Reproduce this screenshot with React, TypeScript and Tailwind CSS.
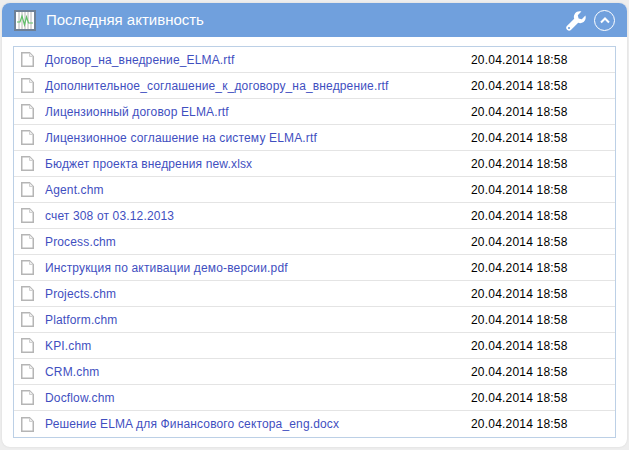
const rows = [
  'Договор_на_внедрение_ELMA.rtf',
  'Дополнительное_соглашение_к_договору_на_внедрение.rtf',
  'Лицензионный договор ELMA.rtf',
  'Лицензионное соглашение на систему ELMA.rtf',
  'Бюджет проекта внедрения new.xlsx',
  'Agent.chm',
  'счет 308 от 03.12.2013',
  'Process.chm',
  'Инструкция по активации демо-версии.pdf',
  'Projects.chm',
  'Platform.chm',
  'KPI.chm',
  'CRM.chm',
  'Docflow.chm',
  'Решение ELMA для Финансового сектора_eng.docx',
];

const FileIcon = () => (
  <svg width="13" height="15" viewBox="0 0 13 15" className="shrink-0">
    <path d="M0.75 0.75H8.5L12.25 4.5V14.25H0.75Z" fill="#fff" stroke="#b5b5b5" strokeWidth="1.5" />
    <path d="M8.5 1V4.5H12" fill="#f0f0f0" stroke="#d0d0d0" />
  </svg>
);

const App = () => {
  return (
    <div className="h-[450px] w-[629px] bg-[#eeeeee] p-[2px] pt-[3px] font-['Liberation_Sans',Arial,sans-serif]">
      <div className="h-[444px] overflow-hidden rounded-lg bg-white shadow-[0_0_2px_#d4d4d4]">
        <div className="flex h-[34px] items-center bg-[#70a0dd] pl-3 pr-3">
          <svg width="22" height="21" viewBox="0 0 22 21" className="shrink-0">
            <rect x="1" y="1" width="20" height="19" fill="#fff" stroke="#6e8096" strokeWidth="2" />
            <path d="M5 2V19M8 2V19M11 2V19M14 2V19M17 2V19" stroke="#b4b4b4" strokeWidth="1" />
            <path d="M3 12H6L8 6L10.5 15L12.5 7L14.5 13H19" fill="none" stroke="#5fbf68" strokeWidth="1.2" />
          </svg>
          <span className="ml-[10px] mt-px text-[15px] text-white">Последняя активность</span>
          <svg width="20" height="20" viewBox="0 0 20 20" className="ml-auto mt-px shrink-0">
            <path
              d="M19.4 4.6L15.8 8.2L12.6 7.4L11.8 4.2L15.4 0.6C13 -0.2 10.4 0.6 9 2.4C7.8 4 7.5 6 8.2 7.8L0.9 15.1C-0.1 16.1 -0.1 17.6 0.9 18.6L1.4 19.1C2.4 20.1 3.9 20.1 4.9 19.1L12.2 11.8C14 12.5 16 12.2 17.6 11C19.4 9.6 20.2 7 19.4 4.6Z"
              fill="#fff"
            />
            <circle cx="3" cy="17" r="1.1" fill="#70a0dd" />
          </svg>
          <div className="ml-2 mt-px flex h-[21px] w-[21px] items-center justify-center rounded-full border-[1.5px] border-white">
            <svg width="10" height="7" viewBox="0 0 10 7">
              <path d="M1 5.5L5 1.5L9 5.5" fill="none" stroke="#fff" strokeWidth="2" />
            </svg>
          </div>
        </div>
        <div className="px-[11px] pt-[9px]">
          <ul className="border border-[#bcd0e6]">
            {rows.map((name, i) => (
              <li
                key={name}
                className={`flex h-[26px] items-center pl-[7px] text-[12px] ${i < rows.length - 1 ? 'border-b border-[#e4e4e4]' : ''}`}
              >
                <FileIcon />
                <span className="ml-[11px] w-[426px] truncate tracking-[0.15px] text-[#3f4fbf]">{name}</span>
                <span className="tracking-[0.2px] text-black">20.04.2014 18:58</span>
              </li>
            ))}
          </ul>
        </div>
      </div>
    </div>
  );
};

export default App;
